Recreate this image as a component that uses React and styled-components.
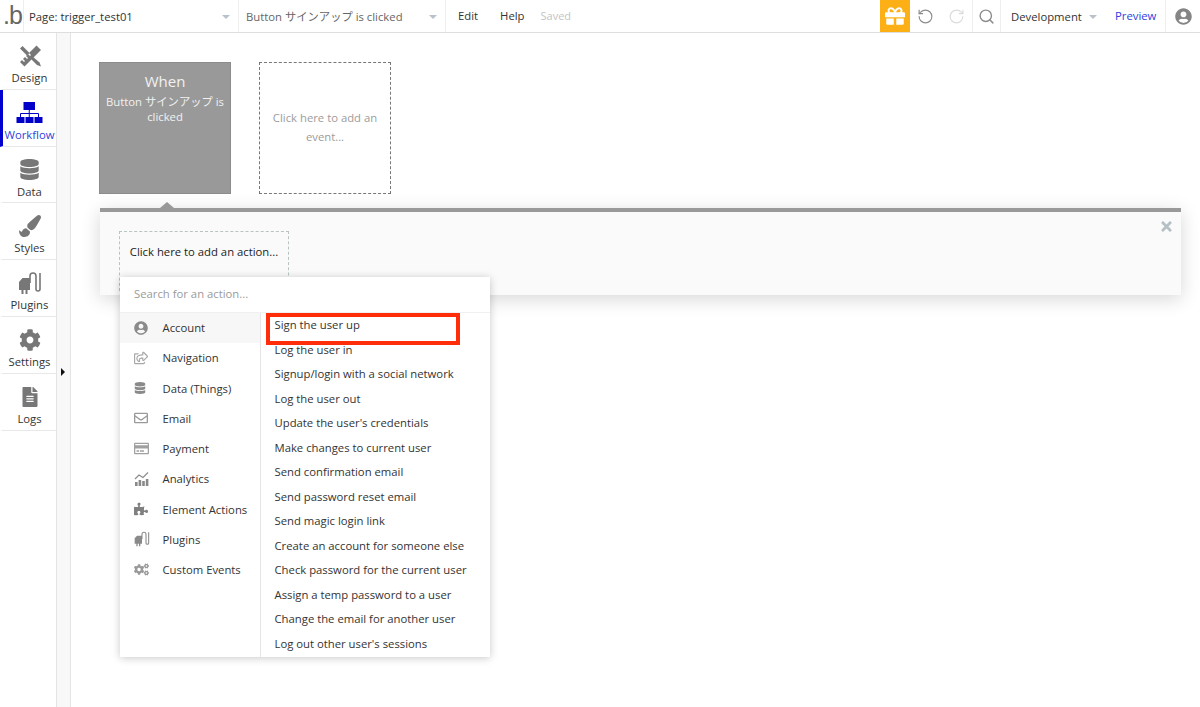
import React from "react";
import styled, { createGlobalStyle } from "styled-components";
import {
  FaCog,
  FaCogs,
  FaDatabase,
  FaFileAlt,
  FaGift,
  FaPaintBrush,
  FaPuzzlePiece,
  FaRegCreditCard,
  FaRegEnvelope,
  FaRegShareSquare,
  FaTimes,
  FaUserCircle,
} from "react-icons/fa";
import { RotateCcw, RotateCw, Search } from "lucide-react";

const FONT = `"Open Sans", "Noto Sans CJK JP", sans-serif`;

const DesignIcon = ({ size = 24 }) => (
  <svg width={size} height={size} viewBox="0 0 24 24" fill="#777">
    <path d="M4.5 2 L2 4.5 L9 11.5 L11.5 9 Z" />
    <path d="M14 12 L12 14 L19 21 L23 22.5 L21.5 18.5 Z" />
    <path d="M18.5 1.5 L23 6 L6.5 22.5 L2 18 L4 16 L6 18 L7 17 L5 15 L7 13 L9 15 L10 14 L8 12 L10 10 L12 12 L13 11 L11 9 Z" />
  </svg>
);

const WorkflowIcon = () => (
  <svg width="27" height="22" viewBox="0 0 27 22" fill="#0000c8">
    <rect x="7.5" y="0" width="11.5" height="8" />
    <rect x="0.5" y="15" width="8" height="6" />
    <rect x="9.5" y="15" width="8" height="6" />
    <rect x="18.5" y="15" width="8" height="6" />
    <path d="M13.25 8 V15 M4.5 15 V11.5 H22.5 V15" fill="none" stroke="#0000c8" />
  </svg>
);

const PlugIcon = ({ size = 24, color = "#777" }) => (
  <svg width={size} height={size} viewBox="0 0 24 24" fill={color}>
    <path d="M1 11 L4.5 7 H12 V19 H9.5 V23 H7.5 V19 H5.5 V23 H3.5 V19 H1 Z" />
    <path
      d="M12 12 V5 a3 3 0 0 1 6 0 V18 a2 2 0 0 0 4 0 V2"
      fill="none"
      stroke={color}
      strokeWidth="1.6"
    />
  </svg>
);

const ChartIcon = () => (
  <svg width="16" height="16" viewBox="0 0 16 16" fill="#8a8a8a">
    <rect x="1" y="11" width="2.6" height="4" />
    <rect x="4.6" y="9" width="2.6" height="6" />
    <rect x="8.2" y="10" width="2.6" height="5" />
    <rect x="11.8" y="8" width="2.6" height="7" />
    <path d="M1 8 L5 4 L9 6.5 L14 1.5" fill="none" stroke="#8a8a8a" strokeWidth="1.1" />
  </svg>
);

const sideItems = [
  { label: "Design", icon: <DesignIcon /> },
  { label: "Workflow", icon: <WorkflowIcon />, active: true },
  { label: "Data", icon: <FaDatabase size={21} color="#777" /> },
  { label: "Styles", icon: <FaPaintBrush size={22} color="#777" /> },
  { label: "Plugins", icon: <PlugIcon /> },
  { label: "Settings", icon: <FaCog size={22} color="#777" /> },
  { label: "Logs", icon: <FaFileAlt size={20} color="#777" /> },
];

const categories = [
  { label: "Account", icon: <FaUserCircle size={14} color="#8a8a8a" />, active: true },
  { label: "Navigation", icon: <FaRegShareSquare size={14} color="#a8a8a8" /> },
  { label: "Data (Things)", icon: <FaDatabase size={12} color="#8a8a8a" /> },
  { label: "Email", icon: <FaRegEnvelope size={14} color="#9a9a9a" /> },
  { label: "Payment", icon: <FaRegCreditCard size={15} color="#a0a0a0" /> },
  { label: "Analytics", icon: <ChartIcon /> },
  { label: "Element Actions", icon: <FaPuzzlePiece size={14} color="#808080" /> },
  { label: "Plugins", icon: <PlugIcon size={16} color="#8a8a8a" /> },
  { label: "Custom Events", icon: <FaCogs size={15} color="#9a9a9a" /> },
];

const actions = [
  "Sign the user up",
  "Log the user in",
  "Signup/login with a social network",
  "Log the user out",
  "Update the user's credentials",
  "Make changes to current user",
  "Send confirmation email",
  "Send password reset email",
  "Send magic login link",
  "Create an account for someone else",
  "Check password for the current user",
  "Assign a temp password to a user",
  "Change the email for another user",
  "Log out other user's sessions",
];

export default function App() {
  return (
    <Page>
      <GlobalStyle />
      <TopBar>
        <Logo>
          <LogoDot>.</LogoDot>b
        </Logo>
        <Dropdown $width={215}>
          <span>Page: trigger_test01</span>
          <Caret />
        </Dropdown>
        <Dropdown $width={207} $muted>
          <span>Button サインアップ is clicked</span>
          <Caret />
        </Dropdown>
        <MenuLink $left={12}>Edit</MenuLink>
        <MenuLink $left={22}>Help</MenuLink>
        <SavedLabel>Saved</SavedLabel>
        <Spacer />
        <GiftButton>
          <FaGift size={20} color="#fff" />
        </GiftButton>
        <HistoryButton>
          <RotateCcw size={17} color="#8c8c8c" strokeWidth={1.6} />
        </HistoryButton>
        <HistoryButton>
          <RotateCw size={17} color="#dcdcdc" strokeWidth={1.6} />
        </HistoryButton>
        <SearchButton>
          <Search size={17} color="#8c8c8c" strokeWidth={2} />
        </SearchButton>
        <EnvDropdown>
          <span>Development</span>
          <Caret />
        </EnvDropdown>
        <PreviewLink>Preview</PreviewLink>
        <AvatarSlot>
          <FaUserCircle size={17} color="#858585" />
        </AvatarSlot>
      </TopBar>
      <Body>
        <Sidebar>
          {sideItems.map((item) => (
            <SideItem key={item.label} $active={item.active}>
              <SideIcon>{item.icon}</SideIcon>
              <span>{item.label}</span>
            </SideItem>
          ))}
        </Sidebar>
        <Gutter>
          <GutterArrow />
        </Gutter>
        <Canvas>
          <EventRow>
            <EventCard>
              <EventTitle>When</EventTitle>
              <EventText>Button サインアップ is clicked</EventText>
            </EventCard>
            <AddEvent>Click here to add an event...</AddEvent>
          </EventRow>
          <ActionPanel>
            <Notch />
            <AddAction>Click here to add an action...</AddAction>
            <CloseIcon>
              <FaTimes size={15} color="#b4c0c4" />
            </CloseIcon>
            <ActionMenu>
              <SearchRow>Search for an action...</SearchRow>
              <MenuColumns>
                <CategoryList>
                  {categories.map((cat) => (
                    <CategoryRow key={cat.label} $active={cat.active}>
                      <CategoryIcon>{cat.icon}</CategoryIcon>
                      {cat.label}
                    </CategoryRow>
                  ))}
                </CategoryList>
                <ActionList>
                  {actions.map((name) => (
                    <ActionRow key={name}>{name}</ActionRow>
                  ))}
                  <RedMark />
                </ActionList>
              </MenuColumns>
            </ActionMenu>
          </ActionPanel>
        </Canvas>
      </Body>
    </Page>
  );
}

const GlobalStyle = createGlobalStyle`
  html, body {
    margin: 0;
    padding: 0;
    background: #fff;
  }
  * {
    box-sizing: border-box;
  }
`;

const Page = styled.div`
  width: 1200px;
  height: 707px;
  overflow: hidden;
  display: flex;
  flex-direction: column;
  font-family: ${FONT};
  color: #333;
  background: #fff;
`;

const TopBar = styled.div`
  height: 33px;
  flex: none;
  display: flex;
  align-items: stretch;
  border-bottom: 1px solid #dedede;
  font-size: 11.3px;
`;

const Logo = styled.div`
  width: 24px;
  flex: none;
  font-size: 25px;
  line-height: 30px;
  color: #666;
  padding-left: 3px;
  border-right: 1px solid #eee;
  font-family: "Liberation Sans", sans-serif;
`;

const LogoDot = styled.span`
  margin-right: -1px;
`;

const Dropdown = styled.div`
  width: ${({ $width }) => $width}px;
  flex: none;
  display: flex;
  align-items: center;
  justify-content: space-between;
  padding: 0 8px 0 5px;
  border-right: 1px solid #eee;
  color: ${({ $muted }) => ($muted ? "#666" : "#333")};
  & > span {
    margin-left: ${({ $muted }) => ($muted ? 2 : 0)}px;
  }
`;

const Caret = styled.i`
  width: 0;
  height: 0;
  margin: 2px 0 0 0;
  border-left: 4px solid transparent;
  border-right: 4px solid transparent;
  border-top: 4px solid #b9c2ca;
`;

const MenuLink = styled.div`
  margin-left: ${({ $left }) => $left}px;
  line-height: 32px;
  color: #333;
`;

const SavedLabel = styled.div`
  margin-left: 16px;
  line-height: 32px;
  font-size: 11px;
  color: #c4c4c4;
`;

const Spacer = styled.div`
  flex: 1;
`;

const GiftButton = styled.div`
  width: 30px;
  flex: none;
  display: flex;
  align-items: center;
  justify-content: center;
  background: #fdb015;
`;

const HistoryButton = styled.div`
  width: 31px;
  flex: none;
  display: flex;
  align-items: center;
  justify-content: center;
`;

const SearchButton = styled.div`
  width: 29px;
  flex: none;
  display: flex;
  align-items: center;
  justify-content: center;
  border-left: 1px solid #eee;
  border-right: 1px solid #eee;
`;

const EnvDropdown = styled.div`
  width: 100px;
  flex: none;
  display: flex;
  align-items: center;
  gap: 7px;
  padding-left: 10px;
`;

const PreviewLink = styled.div`
  width: 65px;
  flex: none;
  padding-left: 14px;
  line-height: 32px;
  color: #2f3fe0;
  border-right: 1px solid #eee;
`;

const AvatarSlot = styled.div`
  width: 34px;
  flex: none;
  display: flex;
  align-items: center;
  justify-content: center;
`;

const Body = styled.div`
  flex: 1;
  display: flex;
  min-height: 0;
`;

const Sidebar = styled.div`
  width: 57px;
  flex: none;
  border-right: 1px solid #e4e4e4;
`;

const SideItem = styled.div`
  height: 56.8px;
  display: flex;
  flex-direction: column;
  align-items: center;
  padding-top: 10px;
  font-size: 11.3px;
  line-height: 17px;
  color: ${({ $active }) => ($active ? "#2f3fe0" : "#333")};
  border-bottom: 1px solid #e8e8e8;
  border-left: 3px solid ${({ $active }) => ($active ? "#0000d0" : "transparent")};
`;

const SideIcon = styled.div`
  height: 26px;
  display: flex;
  align-items: center;
  justify-content: center;
`;

const Gutter = styled.div`
  width: 14px;
  flex: none;
  position: relative;
  background: #f8f8f8;
  border-right: 1px solid #e4e4e4;
`;

const GutterArrow = styled.i`
  position: absolute;
  left: 4px;
  top: 335px;
  width: 0;
  height: 0;
  border-top: 4px solid transparent;
  border-bottom: 4px solid transparent;
  border-left: 4px solid #111;
`;

const Canvas = styled.div`
  flex: 1;
  padding: 29px 19px 0 28px;
  background: #fff;
`;

const EventRow = styled.div`
  display: flex;
  gap: 28px;
`;

const EventCard = styled.div`
  width: 132px;
  height: 132px;
  padding-top: 8px;
  background: #999;
  border: 1px solid #8c8c8c;
  color: #f1f1f1;
  text-align: center;
`;

const EventTitle = styled.div`
  font-size: 15px;
  line-height: 20px;
`;

const EventText = styled.div`
  margin-top: 3px;
  padding: 0 5px;
  font-size: 11.3px;
  line-height: 15px;
`;

const AddEvent = styled.div`
  width: 132px;
  height: 132px;
  padding: 45px 10px 0;
  border: 1px dashed #777;
  font-size: 11.3px;
  line-height: 19px;
  color: #9c9c9c;
  text-align: center;
`;

const ActionPanel = styled.div`
  position: relative;
  height: 87px;
  margin: 14px 0 0 1px;
  padding: 19px 19px;
  background: #fafafa;
  border-top: 4px solid #999;
  box-shadow: 0 4px 18px rgba(0, 0, 0, 0.16);
`;

const Notch = styled.i`
  position: absolute;
  left: 60px;
  top: -10px;
  width: 0;
  height: 0;
  border-left: 7px solid transparent;
  border-right: 7px solid transparent;
  border-bottom: 6px solid #999;
`;

const AddAction = styled.div`
  width: 170px;
  height: 60px;
  padding-top: 10px;
  text-align: center;
  border: 1px dashed #b8c4c4;
  font-size: 11.3px;
  line-height: 20px;
  color: #222;
`;

const CloseIcon = styled.div`
  position: absolute;
  top: 7px;
  right: 7px;
  line-height: 0;
`;

const ActionMenu = styled.div`
  position: absolute;
  left: 19.5px;
  top: 65px;
  width: 370.5px;
  height: 380px;
  background: #fff;
  box-shadow: 0 1px 8px rgba(0, 0, 0, 0.22);
  display: flex;
  flex-direction: column;
`;

const SearchRow = styled.div`
  height: 36px;
  flex: none;
  padding-left: 14.5px;
  line-height: 34px;
  font-size: 11.3px;
  color: #9a9a9a;
  border-bottom: 1px solid #f0f0f0;
`;

const MenuColumns = styled.div`
  flex: 1;
  display: flex;
`;

const CategoryList = styled.div`
  width: 141px;
  flex: none;
  border-right: 1px solid #e6e6e6;
`;

const CategoryRow = styled.div`
  height: 30.25px;
  display: flex;
  align-items: center;
  padding-bottom: 1px;
  font-size: 11.3px;
  color: #333;
  background: ${({ $active }) => ($active ? "#f7f7f7" : "transparent")};
`;

const CategoryIcon = styled.div`
  width: 43px;
  flex: none;
  padding-left: 14px;
  display: flex;
  align-items: center;
`;

const ActionList = styled.div`
  position: relative;
  flex: 1;
  padding-left: 14px;
`;

const ActionRow = styled.div`
  height: 24.5px;
  font-size: 11.3px;
  line-height: 24px;
  color: #333;
`;

const RedMark = styled.div`
  position: absolute;
  left: 5px;
  top: 0;
  width: 194px;
  height: 32px;
  border: 4px solid #ff2d0a;
`;
